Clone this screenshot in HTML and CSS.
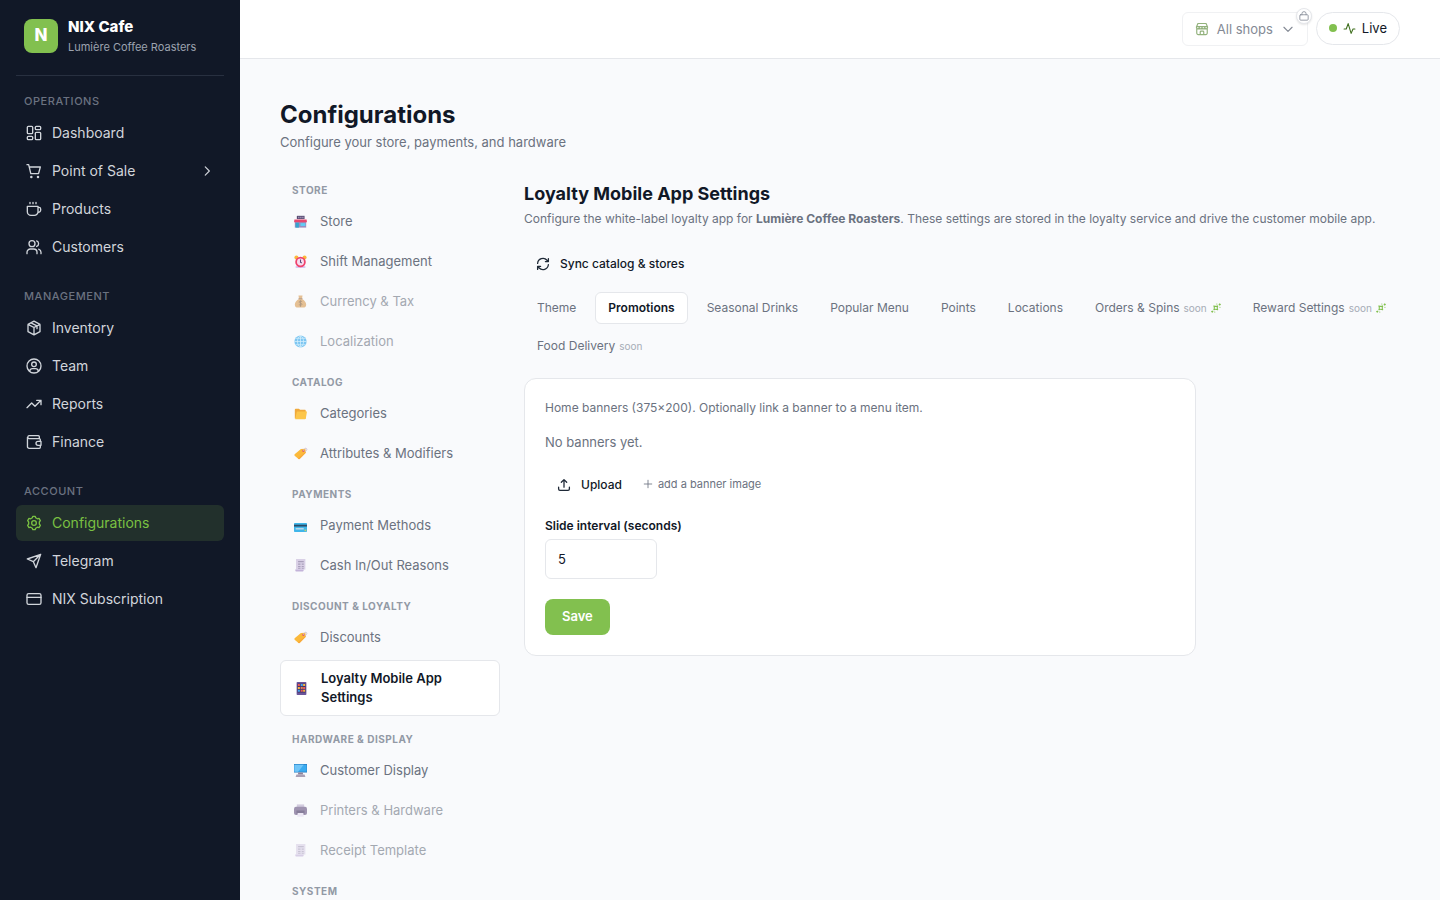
FILE: index.html
```html
<!DOCTYPE html>
<html lang="en">
<head>
<meta charset="utf-8">
<title>Configurations – NIX Cafe</title>
<link rel="stylesheet" href="styles.css">
</head>
<body>
<svg class="sprite" aria-hidden="true">
  <symbol id="receipt" viewBox="0 0 16 16"><path fill="#d9d0e6" d="M2.500 0H14v13H2.500z"/><path fill="#c3b3d9" d="M1.500 13H12c0 2-1 2.500-2 2.500H3c-1 0-1.500-1-1.500-2.500z"/><path fill="#a99fbb" d="M5 2.500h7V4H5zM5 5.500h3V7H5zM9.500 5.500H12V7H9.500zM5 8.500h3V10H5zM9.500 8.500H12V10H9.500zM5 11h3v1H5zM9.500 11H12v1H9.500z"/></symbol>
  <symbol id="tag" viewBox="0 0 16 16"><path fill="#fbb93b" d="M8.500 2.500 14 2l.5 5-7.300 7.500c-.6.600-1.400.600-2 0L.8 10.800c-.5-.5-.5-1.300 0-1.900z"/><path fill="#f9a83b" d="m14.500 7-7.300 7.500c-.6.600-1.400.600-2 0l-.5-.5L14 6z"/><circle cx="11.500" cy="4.800" r="1.300" fill="#e2566b"/><path fill="none" stroke="#c9b9d6" d="M11.500 4.800C12 2 14.500.800 15.500 2s-.5 3-2 4"/></symbol>
  <symbol id="sparkle" viewBox="0 0 24 24"><path fill="none" stroke="currentColor" stroke-width="2.600" stroke-linejoin="round" d="M7 7c3 1.500 6 1.500 9 0-1.500 3-1.500 6 0 9-3-1.500-6-1.500-9 0 1.500-3 1.500-6 0-9z"/><path stroke="currentColor" stroke-width="2.600" stroke-linecap="round" d="M14 2.500h.1M21 2v3M19.500 3.500h3M21.500 10v.1M3 19v3M1.500 20.500h3M9 21.500h.1"/></symbol>
</svg>
<div class="app">
  <aside class="sidebar">
    <div class="brand">
      <span class="logo">N</span>
      <div class="brand-text"><div class="brand-name">NIX Cafe</div><div class="brand-sub">Lumière Coffee Roasters</div></div>
    </div>
    <nav class="menu" aria-label="Main">
      <section class="menu-group">
        <h2 class="menu-title">Operations</h2>
        <a class="menu-item" href="#"><svg class="icon" viewBox="0 0 24 24"><rect x="2" y="2" width="8" height="11" rx="1.500"/><rect x="14" y="2" width="8" height="5" rx="1.500"/><rect x="14" y="11" width="8" height="11" rx="1.500"/><rect x="2" y="17" width="8" height="5" rx="1.500"/></svg>Dashboard</a>
        <a class="menu-item" href="#"><svg class="icon" viewBox="0 0 24 24"><path d="M1.500 2.500H4l3.200 13.500h11.600L21.500 6H5"/><circle cx="8" cy="21" r=".9"/><circle cx="18" cy="21" r=".9"/></svg>Point of Sale<svg class="icon chevron" viewBox="0 0 24 24"><path d="m9 5 7 7-7 7"/></svg></a>
        <a class="menu-item" href="#"><svg class="icon" viewBox="0 0 24 24"><path d="M2 8h16v8a5.500 5.500 0 0 1-5.500 5.500h-5A5.500 5.500 0 0 1 2 16zM18 9.500h1.500a2.500 2.500 0 0 1 2.500 2.500v1.500a3.500 3.500 0 0 1-4 3.500M6 2v2M10.500 2v2M15 2v2"/></svg>Products</a>
        <a class="menu-item" href="#"><svg class="icon" viewBox="0 0 24 24"><circle cx="9" cy="7" r="4.500"/><path d="M1.500 22v-2a5 5 0 0 1 5-5h5a5 5 0 0 1 5 5v2M16 2.800a4.500 4.500 0 0 1 0 8.400M22.500 22v-2a5 5 0 0 0-3.500-4.700"/></svg>Customers</a>
      </section>
      <section class="menu-group">
        <h2 class="menu-title">Management</h2>
        <a class="menu-item" href="#"><svg class="icon" viewBox="0 0 24 24"><path d="m12 1.800 9 4.700v11L12 22.200 3 17.500v-11zM3 6.500l9 4.700 9-4.700M12 11.200v11M7.500 4.200l9 4.700V13"/></svg>Inventory</a>
        <a class="menu-item" href="#"><svg class="icon" viewBox="0 0 24 24"><circle cx="12" cy="12" r="10.500"/><circle cx="12" cy="9.500" r="3.500"/><path d="M5.500 19.500c.5-2.500 2-3.500 4-3.500h5c2 0 3.500 1 4 3.500"/></svg>Team</a>
        <a class="menu-item" href="#"><svg class="icon" viewBox="0 0 24 24"><path d="m1.500 17.500 7-7 5 5 9-9M16 6.500h6.500V13"/></svg>Reports</a>
        <a class="menu-item" href="#"><svg class="icon" viewBox="0 0 24 24"><path d="M20 7V4a1.500 1.500 0 0 0-1.500-1.500h-14a2.300 2.300 0 0 0 0 4.500H20a1.500 1.500 0 0 1 1.500 1.500V11M2.200 5v14a2.500 2.500 0 0 0 2.500 2.500H20a1.500 1.500 0 0 0 1.500-1.500v-3"/><path d="M22.500 11H18a3 3 0 0 0 0 6h4.500z"/></svg>Finance</a>
      </section>
      <section class="menu-group">
        <h2 class="menu-title">Account</h2>
        <a class="menu-item menu-item-active" href="#" aria-current="page"><svg class="icon" viewBox="0 0 24 24"><path d="M9.500 4.200 10.300 2h3.400l.8 2.200 2.500 1.500 2.500-.5 2 3.300L20 10.500v3l1.500 2-2 3.300-2.500-.5-2.500 1.500-.8 2.200h-3.400l-.8-2.200L7 18.300l-2.500.5-2-3.300 1.500-2v-3l-1.500-2 2-3.300 2.500.5z"/><circle cx="12" cy="12" r="3.500"/></svg>Configurations</a>
        <a class="menu-item" href="#"><svg class="icon" viewBox="0 0 24 24"><path d="M22 2 2 9l9 4 4 9zM22 2 11 13"/></svg>Telegram</a>
        <a class="menu-item" href="#"><svg class="icon" viewBox="0 0 24 24"><rect x="1.500" y="4" width="21" height="16" rx="2.500"/><path d="M1.500 9.500h21"/></svg>NIX Subscription</a>
      </section>
    </nav>
  </aside>

  <div class="workspace">
    <header class="topbar">
      <div class="shop-wrap">
        <button class="shop-picker" type="button" disabled>
          <svg class="icon icon-shop" viewBox="0 0 24 24"><path d="M3 11v8a2.500 2.500 0 0 0 2.500 2.500h13A2.500 2.500 0 0 0 21 19v-8M9 21.500V17a1.500 1.500 0 0 1 1.500-1.500h3A1.500 1.500 0 0 1 15 17v4.500M5 2.500h14l2.500 6v1a2.300 2.300 0 0 1-4.700 0 2.300 2.300 0 0 1-4.800 0 2.300 2.300 0 0 1-4.800 0 2.300 2.300 0 0 1-4.700 0v-1zM2.500 8h19"/></svg>
          All shops
          <svg class="icon icon-small" viewBox="0 0 24 24"><path d="m5 9 7 7 7-7"/></svg>
        </button>
        <span class="lock"><svg class="icon" viewBox="0 0 24 24"><rect x="2" y="9" width="20" height="13" rx="2"/><path d="M7 9V6.500a5 5 0 0 1 10 0V9"/></svg></span>
      </div>
      <div class="live"><span class="dot"></span><svg class="icon icon-pulse" viewBox="0 0 24 24"><path d="M2 13h4L9.500 3l5.500 18 3.500-8H22"/></svg>Live</div>
    </header>

    <main class="page">
      <h1 class="page-title">Configurations</h1>
      <p class="page-sub">Configure your store, payments, and hardware</p>
      <div class="columns">
        <nav class="settings-nav" aria-label="Settings">
          <section class="nav-group">
            <h2 class="nav-title">Store</h2>
            <a class="nav-item" href="#"><svg class="emoji" viewBox="0 0 16 16"><path fill="#594b73" d="M3.500 1h9.500v4H3.500z"/><path fill="#d5cce6" d="M5.500 2h1v2h-1zM8 2h1v2H8zM10.500 2h1v2h-1z"/><path fill="#9b8fc0" d="M1 8h14v7.500H1z"/><path fill="#e8486f" d="M.5 5.500h15L16 9H0z"/><path fill="#35a5cf" d="M2 9.500h4v6H2z"/><path fill="#62cdf5" d="M8 10h6v3.500H8z"/></svg>Store</a>
            <a class="nav-item" href="#"><svg class="emoji" viewBox="0 0 16 16"><circle cx="3" cy="3" r="2.500" fill="#fbb83a"/><circle cx="13" cy="3" r="2.500" fill="#fbb83a"/><path fill="#d9c8f0" d="M2 13.500h12V16H2z"/><circle cx="8" cy="8.500" r="6.500" fill="#f0426d"/><circle cx="8" cy="8.500" r="4.300" fill="#f6dcef"/><path d="M8 5.500v3.300l1.500 1" stroke="#5b4a78" stroke-width="1.300" fill="none"/></svg>Shift Management</a>
            <a class="nav-item nav-item-muted" href="#"><svg class="emoji" viewBox="0 0 16 16"><path fill="#d99a50" d="M5.500.5h5L9.800 5c3 1.500 5.200 4 5.200 7 0 2.500-1.500 3.500-4 3.500H5c-2.500 0-4-1-4-3.500 0-3 2.200-5.500 5.200-7z"/><path fill="#8c6240" d="M5.500 4h5v1.200h-5z"/><path d="M10 8C6 6.500 5 9.500 8 10s2.500 3.500-2 2M8 6.500v8" stroke="#7a5530" stroke-width="1" fill="none"/></svg>Currency &amp; Tax</a>
            <a class="nav-item nav-item-muted" href="#"><svg class="emoji" viewBox="0 0 16 16"><circle cx="8" cy="8" r="7.500" fill="#2ba5ec"/><path d="M8 .5v15M.5 8h15M2 4h12M2 12h12M8 .5C3 4 3 12 8 15.500M8 .5c5 3.500 5 11.500 0 15" stroke="#c2ebfd" fill="none" stroke-width=".9"/></svg>Localization</a>
          </section>
          <section class="nav-group">
            <h2 class="nav-title">Catalog</h2>
            <a class="nav-item" href="#"><svg class="emoji" viewBox="0 0 16 16"><path fill="#f0a93b" d="M1 3.500C1 2.500 1.500 2 2.500 2H6l1.500 1.500H13c1 0 1.500.5 1.500 1.500v9H1z"/><path fill="#fcc64b" d="M3.500 5.500H16L14.500 14c-.1.600-.5 1-1.200 1H1.500z"/></svg>Categories</a>
            <a class="nav-item" href="#"><svg class="emoji"><use href="#tag"/></svg>Attributes &amp; Modifiers</a>
          </section>
          <section class="nav-group">
            <h2 class="nav-title">Payments</h2>
            <a class="nav-item" href="#"><svg class="emoji" viewBox="0 0 16 16"><rect x="0" y="5" width="16" height="11" rx="1" fill="#3fb6ea"/><path fill="#2a4b68" d="M0 7h16v2.300H0z"/><path fill="#b9d6ea" d="M2 11h10v2H2z"/><path fill="#c9d26a" d="M13 13h2v2h-2z"/></svg>Payment Methods</a>
            <a class="nav-item" href="#"><svg class="emoji"><use href="#receipt"/></svg>Cash In/Out Reasons</a>
          </section>
          <section class="nav-group">
            <h2 class="nav-title">Discount &amp; Loyalty</h2>
            <a class="nav-item" href="#"><svg class="emoji"><use href="#tag"/></svg>Discounts</a>
            <a class="nav-item nav-item-active" href="#" aria-current="true"><svg class="emoji" viewBox="0 0 16 16"><rect x="2" y="0" width="12" height="16" rx="1" fill="#6a559a"/><path fill="#40336a" d="M3 2h10v11H3z"/><path fill="#ef5a5a" d="M3.500 2.500H6V5H3.500zM10 6h2.500v2.500H10zM7 9.500h2.500V12H7z"/><path fill="#45a8f0" d="M7 2.500h2.500V5H7zM3.500 9.500H6V12H3.500z"/><path fill="#f8b73d" d="M10 2.500h2.500V5H10zM3.500 6H6v2.500H3.500zM10 9.500h2.500V12H10z"/><path fill="#e8874f" d="M7 6h2.500v2.500H7z"/></svg>Loyalty Mobile App Settings</a>
          </section>
          <section class="nav-group">
            <h2 class="nav-title">Hardware &amp; Display</h2>
            <a class="nav-item" href="#"><svg class="emoji" viewBox="0 0 16 16"><path fill="#2a7fc4" d="M0 0h16v10.500H0z"/><path fill="#3aabf0" d="M.5 1h15v8.500H.5z"/><path fill="#70c5f8" d="M.5 1H12L5 9.500H.5z"/><path fill="#8e8299" d="M5 10.500h6V13H5z"/><path fill="#aaa0b5" d="M3 13h10l1 3H2z"/></svg>Customer Display</a>
            <a class="nav-item nav-item-muted" href="#"><svg class="emoji" viewBox="0 0 16 16"><path fill="#b9accb" d="M3.500.5h9V5h-9z"/><rect y="3.500" width="16" height="10" rx="2.500" fill="#64507f"/><path fill="#3a2a58" d="M3 8h10v4H3z"/><path fill="#e4dcf0" d="M4.500 11h7l.5 4.800H4z"/></svg>Printers &amp; Hardware</a>
            <a class="nav-item nav-item-muted" href="#"><svg class="emoji"><use href="#receipt"/></svg>Receipt Template</a>
          </section>
          <section class="nav-group">
            <h2 class="nav-title">System</h2>
          </section>
        </nav>

        <section class="content">
          <h2 class="content-title">Loyalty Mobile App Settings</h2>
          <p class="content-sub">Configure the white-label loyalty app for <strong>Lumière Coffee Roasters</strong>. These settings are stored in the loyalty service and drive the customer mobile app.</p>
          <button class="ghost sync" type="button"><svg class="icon icon-dark" viewBox="-1 -1 26 26"><path d="M2 11a10 10 0 0 1 17.500-6L22 7.500M22 2v5.500h-5.500M22 13a10 10 0 0 1-17.500 6L2 16.500M2 22v-5.500h5.500"/></svg>Sync catalog &amp; stores</button>
          <div class="tabs" role="tablist">
            <button class="tab" role="tab" type="button">Theme</button>
            <button class="tab tab-active" role="tab" type="button" aria-selected="true">Promotions</button>
            <button class="tab" role="tab" type="button">Seasonal Drinks</button>
            <button class="tab" role="tab" type="button">Popular Menu</button>
            <button class="tab" role="tab" type="button">Points</button>
            <button class="tab" role="tab" type="button">Locations</button>
            <button class="tab" role="tab" type="button">Orders &amp; Spins <span class="soon">soon</span> <svg class="spark"><use href="#sparkle"/></svg></button>
            <button class="tab" role="tab" type="button">Reward Settings <span class="soon">soon</span> <svg class="spark"><use href="#sparkle"/></svg></button>
            <button class="tab" role="tab" type="button">Food Delivery <span class="soon">soon</span></button>
          </div>
          <form class="card">
            <p class="hint">Home banners (375×200). Optionally link a banner to a menu item.</p>
            <p class="empty">No banners yet.</p>
            <div class="upload-row">
              <button class="ghost" type="button"><svg class="icon icon-dark" viewBox="-1 -1 26 26"><path d="M12 16V2M7 7l5-5 5 5M2 16v3.500A2.500 2.500 0 0 0 4.500 22h15a2.500 2.500 0 0 0 2.500-2.500V16"/></svg>Upload</button>
              <span class="add"><svg class="icon" viewBox="0 0 24 24"><path d="M12 3v18M3 12h18"/></svg>add a banner image</span>
            </div>
            <label class="field-label" for="interval">Slide interval (seconds)</label>
            <input class="field" id="interval" type="text" inputmode="numeric" value="5">
            <button class="save" type="button">Save</button>
          </form>
        </section>
      </div>
    </main>
  </div>
</div>
</body>
</html>
```
FILE: styles.css
```css
* { box-sizing: border-box; }
body { margin: 0; font-family: Inter, "Liberation Sans", sans-serif; font-size: 13px; color: #111827; background: #f9fafc; }
h1, h2, p { margin: 0; }
a { color: inherit; text-decoration: none; }
button, input { font: inherit; color: inherit; }
button { cursor: pointer; }
.sprite { display: none; }
.icon { flex: none; width: 16px; height: 16px; fill: none; stroke: currentColor; stroke-width: 2; stroke-linecap: round; stroke-linejoin: round; }

.app { display: flex; height: 100vh; overflow: hidden; }

.sidebar { flex: none; width: 240px; padding: 0 16px; background: #111827; color: #d1d5db; }
.brand { display: flex; align-items: flex-start; gap: 10px; padding: 17px 8px 18px; border-bottom: 1px solid #283040; }
.logo { display: grid; place-items: center; width: 34px; height: 34px; margin-top: 2px; border-radius: 8px; background: #82c04f; color: #fff; font-size: 17px; line-height: 20px; font-weight: 800; padding-bottom: 2px; }
.brand-name { color: #fff; font-size: 15px; line-height: 20px; font-weight: 800; }
.brand-sub { color: #9ca3af; font-size: 11px; line-height: 20px; }
.menu { display: flex; flex-direction: column; gap: 23px; padding-top: 17px; }
.menu-group { display: flex; flex-direction: column; gap: 2px; }
.menu-title { padding: 0 8px; margin-bottom: 4px; color: #6b7280; font-size: 11px; line-height: 16px; font-weight: 500; letter-spacing: 0.05em; text-transform: uppercase; }
.menu-item { display: flex; align-items: center; gap: 10px; padding: 8px 10px; border-radius: 6px; font-size: 14px; line-height: 20px; font-weight: 400; }
.menu-item-active { background: #22302c; color: #7ac142; }
.chevron { width: 14px; height: 14px; margin-left: auto; }

.workspace { flex: 1; min-width: 0; display: flex; flex-direction: column; }
.topbar { flex: none; display: flex; justify-content: flex-end; align-items: flex-start; gap: 8px; padding: 12px 40px; height: 59px; background: #fff; border-bottom: 1px solid #e5e7eb; }
.shop-wrap { position: relative; }
.shop-picker { display: flex; align-items: center; gap: 8px; height: 34px; padding: 0 12px 1px; border: 1px solid #f0f1f3; border-radius: 6px; background: #fff; color: #848a95; cursor: default; }
.icon-shop { width: 14px; height: 14px; color: #93b27d; }
.icon-small { width: 14px; height: 14px; }
.lock { position: absolute; top: -4px; right: -4px; display: grid; place-items: center; width: 16px; height: 16px; border: 1px solid #e5e7eb; border-radius: 50%; background: #fff; color: #858b98; box-shadow: 0 1px 2px rgb(0 0 0 / 10%); }
.lock .icon { width: 10px; height: 10px; }
.live { display: flex; align-items: center; gap: 6px; height: 33px; padding: 0 12px 1px; border: 1px solid #e5e7eb; border-radius: 20px; font-weight: 400; }
.dot { width: 8px; height: 8px; border-radius: 50%; background: #82c04f; }
.icon-pulse { width: 13px; height: 13px; color: #3f6f1d; }

.page { flex: 1; min-height: 0; overflow-y: auto; scrollbar-width: none; padding: 40px; }
.page-title { font-size: 24px; line-height: 32px; font-weight: 700; }
.page-sub { margin-top: 2px; line-height: 18px; color: #6b7280; }
.columns { display: grid; grid-template-columns: 220px minmax(0, 1fr); gap: 24px; margin-top: 32px; }

.settings-nav { display: flex; flex-direction: column; gap: 16px; }
.nav-group { display: flex; flex-direction: column; gap: 5px; }
.nav-title { padding: 0 12px; margin-bottom: 2px; color: #9299a5; font-size: 10px; line-height: 14px; font-weight: 700; letter-spacing: 0.05em; text-transform: uppercase; }
.nav-item { display: flex; align-items: center; gap: 11px; padding: 8px 12px; border-radius: 6px; line-height: 19px; color: #6b7280; }
.nav-item-muted { opacity: 0.6; }
.nav-item-active { border: 1px solid #e5e7eb; background: #fff; color: #111827; font-weight: 600; }
.emoji { flex: none; width: 17px; height: 13px; }

.content-title { font-size: 18px; line-height: 22px; font-weight: 700; }
.content-sub { margin-top: 5px; font-size: 12px; line-height: 18px; color: #6b7280; }
.content-sub strong { font-weight: 700; }
.ghost { display: flex; align-items: center; gap: 10px; height: 36px; padding: 0 12px 1px; border: 0; background: none; font-size: 12px; font-weight: 500; }
.ghost .icon { width: 14px; height: 14px; stroke-width: 2.4; }
.icon-dark { color: #1f2937; }
.sync { margin-top: 18px; }
.tabs { display: flex; flex-wrap: wrap; gap: 6px; margin-top: 10px; }
.tab { display: flex; align-items: center; gap: 4px; height: 32px; padding: 0 12px 1px; border: 1px solid transparent; border-radius: 6px; background: none; font-size: 12px; color: #6b7280; }
.tab-active { border-color: #e5e7eb; background: #fff; color: #111827; font-weight: 600; }
.soon { font-size: 10px; color: #a6acb6; }
.spark { width: 10px; height: 10px; color: #82c04f; }

.card { max-width: 672px; margin-top: 16px; padding: 20px; border: 1px solid #e5e7eb; border-radius: 12px; background: #fff; }
.hint { font-size: 12px; line-height: 18px; color: #6b7280; }
.empty { margin-top: 16px; line-height: 18px; color: #6b7280; }
.upload-row { display: flex; align-items: center; gap: 9px; margin-top: 16px; }
.add { display: flex; align-items: center; gap: 5px; padding-bottom: 2px; font-size: 11px; color: #6b7280; }
.add .icon { width: 10px; height: 10px; }
.field-label { display: block; margin-top: 14px; font-size: 12px; line-height: 18px; font-weight: 600; }
.field { display: block; width: 112px; height: 40px; margin-top: 4px; padding: 0 12px; border: 1px solid #e5e7eb; border-radius: 6px; background: #fff; }
.save { display: block; height: 36px; margin-top: 20px; padding: 0 17px 2px; border: 0; border-radius: 8px; background: #82c04f; color: #fff; font-weight: 600; }
```
